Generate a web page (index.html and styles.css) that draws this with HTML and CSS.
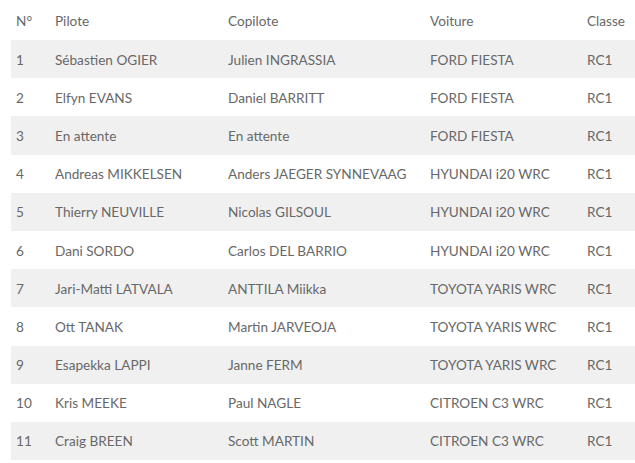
FILE: index.html
```html
<!DOCTYPE html>
<html lang="fr">
<head>
<meta charset="utf-8">
<link rel="stylesheet" href="styles.css">
</head>
<body>
<table class="entries">
  <colgroup>
    <col class="c-num"><col class="c-pilot"><col class="c-copilot"><col class="c-car"><col class="c-class">
  </colgroup>
  <thead>
    <tr><th>N°</th><th>Pilote</th><th>Copilote</th><th>Voiture</th><th>Classe</th></tr>
  </thead>
  <tbody>
    <tr><td>1</td><td>Sébastien OGIER</td><td>Julien INGRASSIA</td><td>FORD FIESTA</td><td>RC1</td></tr>
    <tr><td>2</td><td>Elfyn EVANS</td><td>Daniel BARRITT</td><td>FORD FIESTA</td><td>RC1</td></tr>
    <tr><td>3</td><td>En attente</td><td>En attente</td><td>FORD FIESTA</td><td>RC1</td></tr>
    <tr><td>4</td><td>Andreas MIKKELSEN</td><td>Anders JAEGER SYNNEVAAG</td><td>HYUNDAI i20 WRC</td><td>RC1</td></tr>
    <tr><td>5</td><td>Thierry NEUVILLE</td><td>Nicolas GILSOUL</td><td>HYUNDAI i20 WRC</td><td>RC1</td></tr>
    <tr><td>6</td><td>Dani SORDO</td><td>Carlos DEL BARRIO</td><td>HYUNDAI i20 WRC</td><td>RC1</td></tr>
    <tr><td>7</td><td>Jari-Matti LATVALA</td><td>ANTTILA Miikka</td><td>TOYOTA YARIS WRC</td><td>RC1</td></tr>
    <tr><td>8</td><td>Ott TANAK</td><td>Martin JARVEOJA</td><td>TOYOTA YARIS WRC</td><td>RC1</td></tr>
    <tr><td>9</td><td>Esapekka LAPPI</td><td>Janne FERM</td><td>TOYOTA YARIS WRC</td><td>RC1</td></tr>
    <tr><td>10</td><td>Kris MEEKE</td><td>Paul NAGLE</td><td>CITROEN C3 WRC</td><td>RC1</td></tr>
    <tr><td>11</td><td>Craig BREEN</td><td>Scott MARTIN</td><td>CITROEN C3 WRC</td><td>RC1</td></tr>
  </tbody>
</table>
</body>
</html>
```
FILE: styles.css
```css
html, body {
  margin: 0;
  padding: 0;
  background: #fff;
}
body {
  padding-left: 11px;
  font-family: Lato, "Open Sans", sans-serif;
  font-size: 13.6px;
  color: #686868;
}
.entries {
  width: 624px;
  border-collapse: collapse;
  table-layout: fixed;
}
.c-num { width: 39px; }
.c-pilot { width: 173px; }
.c-copilot { width: 202px; }
.c-car { width: 157px; }
.c-class { width: 53px; }
.entries th {
  height: 38px;
  padding: 2px 0 0 5px;
  text-align: left;
  font-weight: normal;
  vertical-align: middle;
  white-space: nowrap;
}
.entries td {
  height: 37.2px;
  padding: 1px 0 0 5px;
  vertical-align: middle;
  white-space: nowrap;
  overflow: hidden;
}
.entries tbody tr:nth-child(odd) {
  background: #f0f0f0;
}
```
